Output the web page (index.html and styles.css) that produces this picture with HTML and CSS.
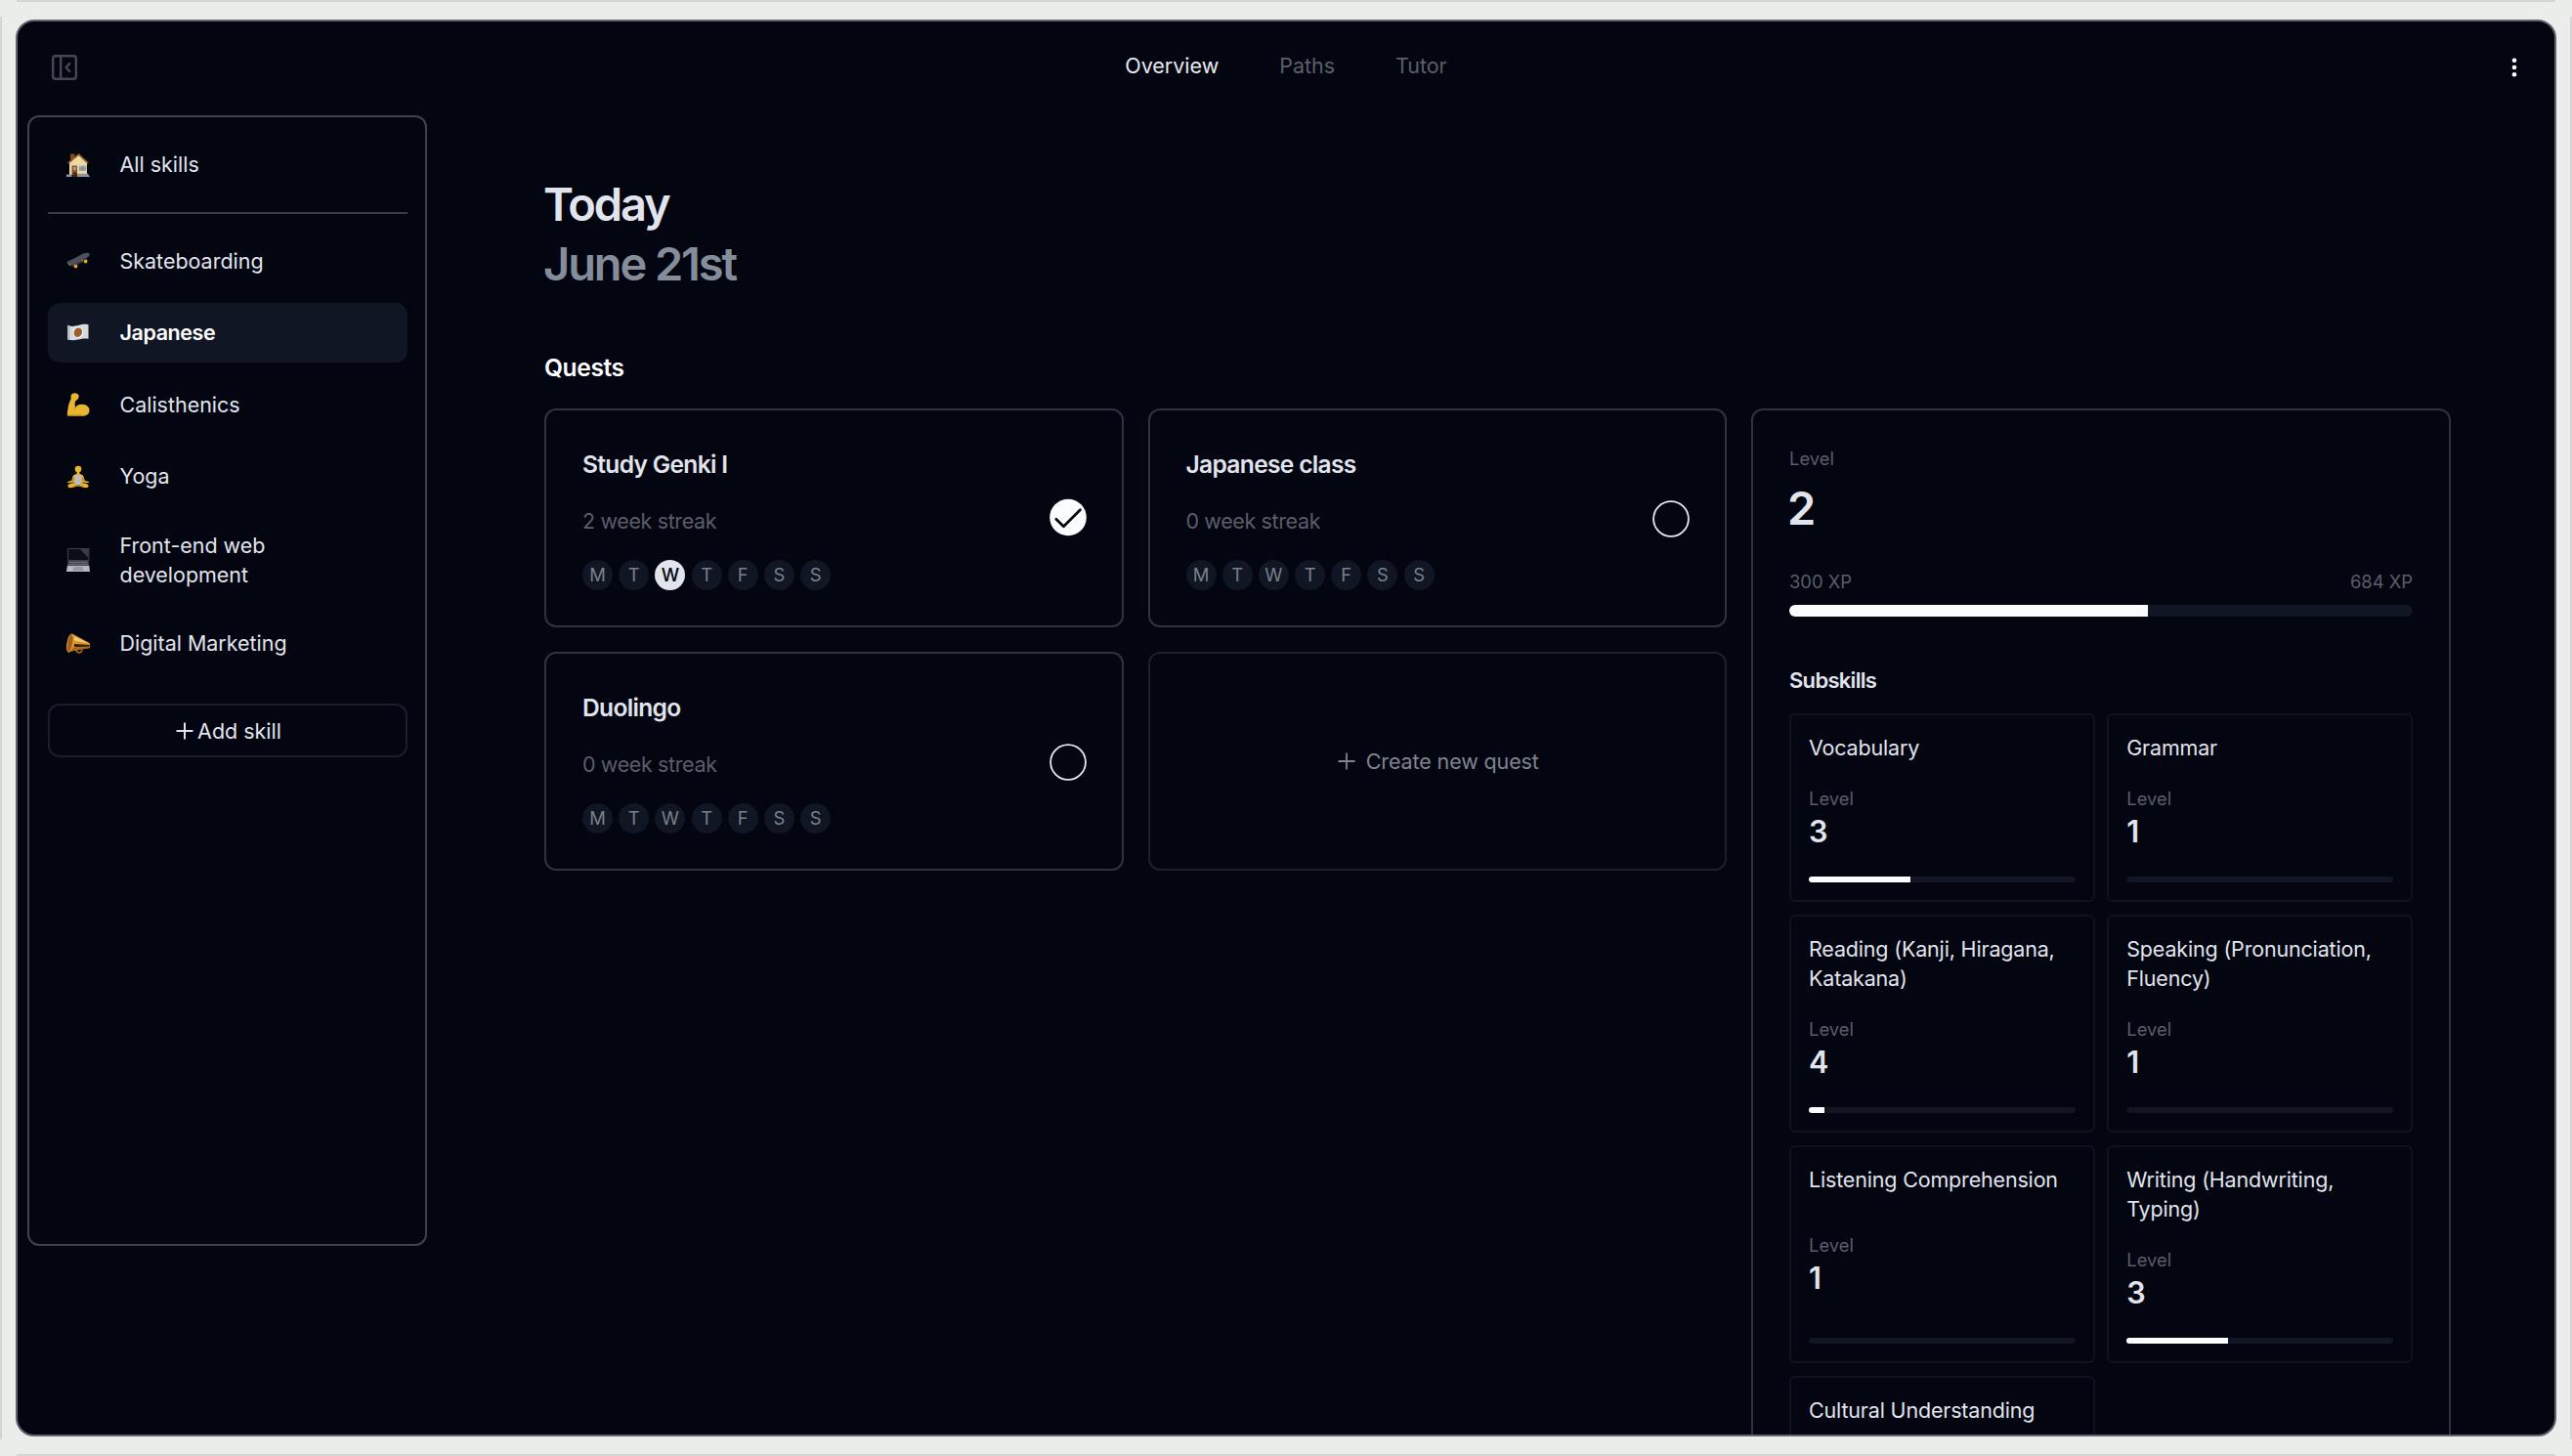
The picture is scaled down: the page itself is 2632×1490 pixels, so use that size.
FILE: index.html
```html
<!DOCTYPE html>
<html lang="en">
<head>
  <meta charset="UTF-8">
  <title>Overview - Japanese</title>
  <link rel="stylesheet" href="styles.css">
</head>
<body>
  <div class="window">
    <header class="topbar">
      <button class="icon-button" aria-label="Collapse sidebar">
        <svg class="panel-icon" viewBox="0 0 26 26" fill="none" stroke="currentColor" stroke-width="2.4" stroke-linecap="round" stroke-linejoin="round">
          <rect x="1.2" y="1.2" width="23.6" height="23.6" rx="2.6"/>
          <path d="M9.2 1.2v23.6M18.2 9.2 14.6 13l3.6 3.800"/>
        </svg>
      </button>
      <nav class="tabs">
        <a class="tab active">Overview</a>
        <a class="tab">Paths</a>
        <a class="tab">Tutor</a>
      </nav>
      <button class="icon-button more" aria-label="More">
        <svg class="dots-icon" viewBox="0 0 6 20" fill="currentColor">
          <circle cx="3" cy="2.8" r="2.3"/>
          <circle cx="3" cy="10" r="2.3"/>
          <circle cx="3" cy="17.2" r="2.3"/>
        </svg>
      </button>
    </header>

    <div class="content">
      <aside class="sidebar">
        <a class="skill">
          <svg class="emoji" viewBox="0 0 24 24">
            <path fill="#7c4a1e" d="M4 .5h4.500v6H4z"/>
            <path fill="#ead9a4" d="M3 9.500 12.500 1.500 21 9v13H3z"/>
            <path fill="none" stroke="#9a5b22" stroke-width="1.700" d="M1.800 9.800 12.500 1.200 22 9.800"/>
            <path fill="#8d5524" d="M5.500 12.500H11V22H5.500z"/>
            <path fill="#9aa3ad" d="M7 14h2.800v3H7zM12.800 12.800h7.500v5.200h-7.500z"/>
            <path fill="none" stroke="#7c8590" stroke-width=".6" d="M16.500 12.800V18M12.800 15.400h7.500"/>
            <path fill="#8f949c" d="M0 21.500h5.500V24H0zM11 20.800h10.800L24 24H11z"/>
            <path fill="#4a2d18" d="M6.500 19.500h4V24h-4z"/>
          </svg>
          <span>All skills</span>
        </a>
        <hr class="divider">
        <a class="skill">
          <svg class="emoji" viewBox="0 0 24 24">
            <path fill="#4b505b" d="M.5 14c0-1.800 3-2.700 6-3.700l11-6c2.500-1 6-1 6.200.8.300 1.700-1.200 3-3.200 4L9 15.500c-3 1.300-7.500 1.500-8.500-1.500z"/>
            <path fill="#363a44" d="M2 15.800c2.500.8 5 .4 7-.4l12-6 .5 1L10 16.800c-2.500 1.200-6.500 1-8-1z"/>
            <circle cx="9.500" cy="17.500" r="1.900" fill="#e5a21e"/>
            <circle cx="19.600" cy="12.500" r="1.900" fill="#e5a21e"/>
            <circle cx="3.200" cy="15.800" r="1" fill="#b06f1c"/>
            <circle cx="15.800" cy="11.500" r="1" fill="#b06f1c"/>
          </svg>
          <span>Skateboarding</span>
        </a>
        <a class="skill selected">
          <svg class="emoji" viewBox="0 0 24 24">
            <path fill="#d5d9e0" d="M1 3.800c4 1.800 7 1 11 .2 3.500-.9 6.500-1.700 10.500-.7v14.500c-4-.7-7 0-10.500.8-4 .8-7 1.200-11-.3z"/>
            <path fill="#b4bac4" d="M1 3.800c1 .6 1.700.8 2.500.9v14.400c-.9-.1-1.700-.4-2.500-.8z"/>
            <ellipse cx="11.800" cy="11.200" rx="5.300" ry="6" fill="#f4f5f7"/>
            <ellipse cx="11.800" cy="11.200" rx="4.100" ry="4.900" transform="rotate(25 11.800 11.200)" fill="#a0602a"/>
          </svg>
          <span>Japanese</span>
        </a>
        <a class="skill">
          <svg class="emoji" viewBox="0 0 24 24">
            <path fill="#e8b52f" d="M5.500 1.200C7.800-.4 11.500.2 12.500 2.500c.5 1.700-.4 4.200-2 5-1.500.7-2 1.500-1.800 5.500l.5 2c1.500-2.500 4-3.500 7-3.300 4.500.2 7.300 2.800 7.300 6 0 4-3 6-8.500 6H1.500c-1-.5-.7-3 0-7.500.5-3.500 1-6 3-9.500C4.800 5 4 2.500 5.500 1.200z"/>
            <path fill="none" stroke="#b9781f" stroke-width=".9" d="M1.500 23h14M9.200 15c-.4.700-.6 1.400-.7 2.200"/>
          </svg>
          <span>Calisthenics</span>
        </a>
        <a class="skill">
          <svg class="emoji" viewBox="0 0 24 24">
            <circle cx="12" cy="4" r="3.300" fill="#e8b52f"/>
            <path fill="#e8b52f" d="M10.500 6.500h3V9c2.500.3 4 1.500 4.400 4l.8 2.700 4.600 1.500-.6 1.100-5.500-.8L12 20l-5.200-2.500-5.500.8-.6-1.100 4.600-1.500.8-2.700c.4-2.500 1.900-3.700 4.400-4z"/>
            <path fill="#e8b52f" d="M1.500 20.500c2-2 5-2.700 7.500-2l3 1.300 3-1.300c2.500-.7 5.500 0 7.500 2 .5 1.800-.5 2.800-3 2.800L12 21.500l-7.500 1.800c-2.500 0-3.500-1-3-2.800z"/>
            <path fill="#b9bcc6" d="M9 9.800h1.200c.8 1.400 2.800 1.400 3.600 0H15l.4 9.200c-1 1.300-5.800 1.300-6.800 0z"/>
            <path fill="none" stroke="#8f5f17" stroke-width=".8" d="m7.500 13-.8 3M16.500 13l.8 3M8 21.500l4-1 4 1"/>
          </svg>
          <span>Yoga</span>
        </a>
        <a class="skill">
          <svg class="emoji" viewBox="0 0 24 24">
            <path fill="#3c404a" d="M1 0h22.500v13H1z"/>
            <path fill="#0c0e17" d="M2 1h20.500v11H2z"/>
            <path fill="#3a3e48" d="M14 1h8.500v9z"/>
            <path fill="#444852" d="M1.500 13h21l.8 5H.8z"/>
            <path fill="#6d727c" d="M3 14h18v.8H3zM2.500 16h19v.8h-19z"/>
            <path fill="#b6b9c0" d="M.8 18h22.500L24 24H0z"/>
            <path fill="#96999f" d="M7.500 19h9l1 4h-11z"/>
          </svg>
          <span>Front-end web development</span>
        </a>
        <a class="skill">
          <svg class="emoji" viewBox="0 0 24 24">
            <path fill="none" stroke="#a3691f" stroke-width="1.600" d="M10 18c0 3.500 5.500 4 6 .2"/>
            <path fill="#d99528" d="M6 1.500 23.500 11c.8 1 .8 4 0 5L4 19.500z"/>
            <path fill="#f0cd79" d="M7.500 4 23 11.500l-15-3z"/>
            <path fill="#2b1f14" d="m8 12 15.500 1v1.700L8 15z"/>
            <path fill="#a9641d" d="m7 15.500 16.500-.5v1.200L5 19.500z"/>
            <ellipse cx="3.800" cy="11.200" rx="2.900" ry="9.400" transform="rotate(10 3.800 11.200)" fill="#a05f1e" stroke="#e0a53a" stroke-width=".9"/>
          </svg>
          <span>Digital Marketing</span>
        </a>
        <button class="add-skill">
          <svg class="plus" viewBox="0 0 18 18" stroke="currentColor" stroke-width="2"><path d="M9 .5v17M.5 9h17"/></svg>
          Add skill
        </button>
      </aside>

      <main class="main">
        <h1 class="today">Today<span class="date">June 21st</span></h1>
        <h2 class="section-title">Quests</h2>

        <div class="board">
          <div class="quests">
            <div class="quest">
              <div class="quest-info">
                <h3 class="quest-title">Study Genki I</h3>
                <p class="streak">2 week streak</p>
                <div class="week">
                  <span>M</span><span>T</span><span class="done">W</span><span>T</span><span>F</span><span>S</span><span>S</span>
                </div>
              </div>
              <svg class="check" viewBox="0 0 38 38">
                <circle cx="19" cy="18.500" r="18.800" fill="#fbfcfe"/>
                <path d="m6.800 20.200 7.600 7.600 17-17" fill="none" stroke="#030511" stroke-width="2.700" stroke-linecap="round" stroke-linejoin="round"/>
              </svg>
            </div>

            <div class="quest">
              <div class="quest-info">
                <h3 class="quest-title">Japanese class</h3>
                <p class="streak">0 week streak</p>
                <div class="week">
                  <span>M</span><span>T</span><span>W</span><span>T</span><span>F</span><span>S</span><span>S</span>
                </div>
              </div>
              <svg class="check" viewBox="0 0 38 38">
                <circle cx="19" cy="20" r="17.900" fill="none" stroke="#e6e8ee" stroke-width="1.800"/>
              </svg>
            </div>

            <div class="quest">
              <div class="quest-info">
                <h3 class="quest-title">Duolingo</h3>
                <p class="streak">0 week streak</p>
                <div class="week">
                  <span>M</span><span>T</span><span>W</span><span>T</span><span>F</span><span>S</span><span>S</span>
                </div>
              </div>
              <svg class="check" viewBox="0 0 38 38">
                <circle cx="19" cy="20" r="17.900" fill="none" stroke="#e6e8ee" stroke-width="1.800"/>
              </svg>
            </div>

            <button class="new-quest">
              <svg class="plus" viewBox="0 0 18 18" stroke="currentColor" stroke-width="1.800"><path d="M9 .5v17M.5 9h17"/></svg>
              Create new quest
            </button>
          </div>

          <section class="progress">
            <div class="label">Level</div>
            <div class="level-big">2</div>
            <div class="xp"><span>300 XP</span><span>684 XP</span></div>
            <div class="bar bar-big"><div class="fill" style="width: 57.5%"></div></div>

            <h3 class="subskills-title">Subskills</h3>
            <div class="subskills">
              <div class="subskill">
                <div class="name">Vocabulary</div>
                <div><div class="label">Level</div><div class="level">3</div></div>
                <div class="bar"><div class="fill" style="width: 38%"></div></div>
              </div>
              <div class="subskill">
                <div class="name">Grammar</div>
                <div><div class="label">Level</div><div class="level">1</div></div>
                <div class="bar"></div>
              </div>
              <div class="subskill">
                <div class="name">Reading (Kanji, Hiragana, Katakana)</div>
                <div><div class="label">Level</div><div class="level">4</div></div>
                <div class="bar"><div class="fill" style="width: 5.8%"></div></div>
              </div>
              <div class="subskill">
                <div class="name">Speaking (Pronunciation, Fluency)</div>
                <div><div class="label">Level</div><div class="level">1</div></div>
                <div class="bar"></div>
              </div>
              <div class="subskill">
                <div class="name">Listening Comprehension</div>
                <div><div class="label">Level</div><div class="level">1</div></div>
                <div class="bar"></div>
              </div>
              <div class="subskill">
                <div class="name">Writing (Handwriting, Typing)</div>
                <div><div class="label">Level</div><div class="level">3</div></div>
                <div class="bar"><div class="fill" style="width: 38%"></div></div>
              </div>
              <div class="subskill">
                <div class="name">Cultural Understanding</div>
                <div class="bar"></div>
              </div>
            </div>
          </section>
        </div>
      </main>
    </div>
  </div>
</body>
</html>
```
FILE: styles.css
```css
html {
  font-size: 24.53px;
}
* {
  box-sizing: border-box;
}
body {
  margin: 0;
  height: 1490px;
  padding: 20px 16px;
  overflow: hidden;
  font-family: Inter, "Liberation Sans", sans-serif;
  font-size: 0.875rem;
  line-height: 1.25rem;
  color: #e1e4ec;
  background:
    linear-gradient(#d4d5d4, #d4d5d4) center top / 2598px 2px no-repeat,
    linear-gradient(#d4d5d4, #d4d5d4) center bottom / 2598px 2px no-repeat,
    linear-gradient(#d4d5d4, #d4d5d4) left center / 2px 1456px no-repeat,
    linear-gradient(#d4d5d4, #d4d5d4) right center / 2px 1456px no-repeat,
    #ebedeb;
}
h1, h2, h3, p {
  margin: 0;
}
button {
  font: inherit;
  color: inherit;
  background: none;
  border: none;
  padding: 0;
}

.window {
  height: 1450px;
  overflow: hidden;
  background: #030511;
  border: 2px solid #60626c;
  border-radius: 19px;
}

/* top bar */
.topbar {
  height: 93px;
  padding: 0 35px;
  display: grid;
  grid-template-columns: 1fr auto 1fr;
  align-items: center;
}
.icon-button {
  display: flex;
  color: #434853;
}
.more {
  justify-self: end;
  color: #fff;
  margin-right: 3.5px;
}
.panel-icon {
  width: 26px;
  height: 26px;
}
.dots-icon {
  width: 6px;
  height: 20px;
}
.tabs {
  display: flex;
  gap: 62px;
  margin-top: -2px;
}
.tab {
  color: #5b5f6a;
}
.tab.active {
  color: #e9ebf0;
}

.content {
  display: flex;
  align-items: flex-start;
  padding: 3px 106px 0 10px;
}

/* sidebar */
.sidebar {
  flex: none;
  width: 409px;
  height: 1157px;
  padding: 18px 18.5px;
  border: 2px solid #40434e;
  border-radius: 12px;
}
.skill {
  display: flex;
  align-items: center;
  min-height: 2.5rem;
  margin-bottom: 0.5rem;
  padding: 12px 18px 12px 19px;
  border-radius: 12px;
}
.skill span {
  margin-left: 31px;
}
.skill.selected {
  background: #111624;
  color: #fff;
  font-weight: 600;
  letter-spacing: -0.4px;
}
.emoji {
  flex: none;
  width: 24px;
  height: 24px;
}
.divider {
  height: 2px;
  margin: 18px 0 17px;
  border: none;
  background: #393c47;
}
.add-skill {
  display: flex;
  align-items: center;
  justify-content: center;
  gap: 4px;
  width: 100%;
  height: 55px;
  margin-top: 31px;
  padding-left: 3px;
  border: 2px solid #1b1e2a;
  border-radius: 12px;
}
.plus {
  width: 18px;
  height: 18px;
}

/* main */
.main {
  flex: 1;
  margin-left: 120px;
  padding-top: 60px;
}
.today {
  font-size: 47px;
  line-height: 2.5rem;
  font-weight: 600;
  letter-spacing: -2.1px;
  margin-left: -1px;
}
.date {
  display: block;
  color: #858d9b;
}
.section-title {
  margin: 57px 0 24px;
  font-size: 1rem;
  line-height: 1.5rem;
  font-weight: 600;
  letter-spacing: -0.35px;
  color: #fff;
}
.board {
  display: grid;
  grid-template-columns: 1fr 716px;
  gap: 25px;
  align-items: start;
}
.quests {
  display: grid;
  grid-template-columns: 1fr 1fr;
  gap: 25px;
}
.quest, .new-quest {
  height: 224px;
  border: 2px solid #30333f;
  border-radius: 12px;
}
.quest {
  display: flex;
  align-items: center;
  justify-content: space-between;
  padding: 0 36px 0 37px;
}
.quest-title {
  font-size: 1rem;
  line-height: 1.5rem;
  font-weight: 600;
  letter-spacing: -0.65px;
}
.streak {
  margin: 1rem 0;
  color: #5a5e69;
  letter-spacing: -0.35px;
}
.week {
  display: flex;
  gap: 6.2px;
}
.week span {
  width: 31px;
  height: 31px;
  border-radius: 50%;
  background: #111624;
  color: #7b8089;
  font-size: 0.75rem;
  line-height: 31px;
  text-align: center;
}
.week .done {
  background: #e1e4ec;
  color: #030511;
  font-weight: 500;
}
.check {
  width: 38px;
  height: 38px;
  overflow: visible;
}
.new-quest {
  display: flex;
  align-items: center;
  justify-content: center;
  gap: 11px;
  padding-left: 2px;
  border-color: #1d202c;
  color: #7f858f;
  letter-spacing: -0.1px;
}

/* level panel */
.progress {
  height: 1400px;
  padding: 37px;
  border: 2px solid #30333f;
  border-radius: 12px;
}
.label, .xp {
  font-size: 0.75rem;
  line-height: 1rem;
  color: #5a5d69;
}
.level-big {
  margin-top: 7px;
  font-size: 47px;
  line-height: 2.5rem;
  font-weight: 600;
  letter-spacing: -2px;
  margin-left: -2px;
}
.xp {
  display: flex;
  justify-content: space-between;
  margin: 33px 0 11.5px;
}
.bar {
  height: 6px;
  border-radius: 3px;
  background: #111624;
  overflow: hidden;
}
.bar-big {
  height: 12px;
  border-radius: 6px;
}
.fill {
  height: 100%;
  background: #fbfcfe;
}
.subskills-title {
  margin: 47px 0 15px;
  font-size: 22px;
  line-height: 1.5rem;
  font-weight: 600;
  letter-spacing: -0.7px;
}
.subskills {
  display: grid;
  grid-template-columns: 1fr 1fr;
  gap: 12.5px;
}
.subskill {
  display: flex;
  flex-direction: column;
  justify-content: space-between;
  gap: 1rem;
  min-height: 193px;
  padding: 17.9px 18px;
  border: 2px solid #10131f;
  border-radius: 6px;
}
.name {
  letter-spacing: -0.15px;
}
.level {
  font-size: 1.25rem;
  line-height: 1.75rem;
  font-weight: 600;
}
```
